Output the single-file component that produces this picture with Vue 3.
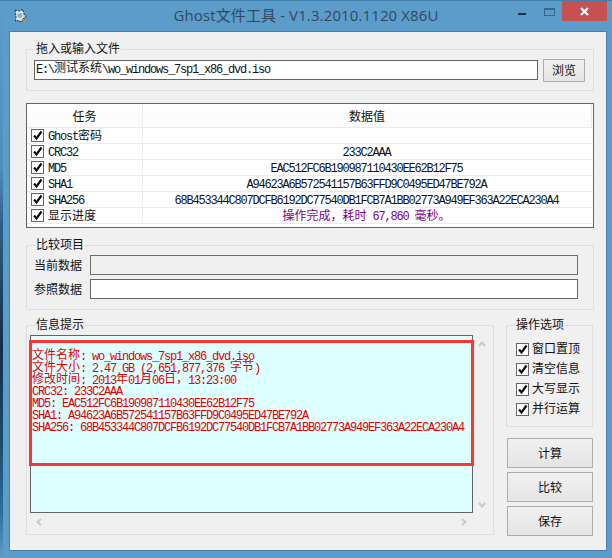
<script setup>
const CJK = /[\u2E80-\u9FFF\uFF00-\uFFEF\u3000-\u303F]/
const split = (text) =>
  text.split(/([\u2E80-\u9FFF\uFF00-\uFFEF\u3000-\u303F]+)/).filter(Boolean).map((t) => ({
    t,
    cjk: CJK.test(t[0]),
  }))

const rows = [
  { name: 'Ghost密码', value: '' },
  { name: 'CRC32', value: '233C2AAA' },
  { name: 'MD5', value: 'EAC512FC6B190987110430EE62B12F75' },
  { name: 'SHA1', value: 'A94623A6B572541157B63FFD9C0495ED47BE792A' },
  { name: 'SHA256', value: '68B453344C807DCFB6192DC77540DB1FCB7A1BB02773A949EF363A22ECA230A4' },
  { name: '显示进度', value: '操作完成，耗时 67,860 毫秒。', progress: true },
]
const log = [
  '文件名称: wo_windows_7sp1_x86_dvd.iso',
  '文件大小: 2.47 GB (2,651,877,376 字节)',
  '修改时间: 2013年01月06日，13:23:00',
  'CRC32: 233C2AAA',
  'MD5: EAC512FC6B190987110430EE62B12F75',
  'SHA1: A94623A6B572541157B63FFD9C0495ED47BE792A',
  'SHA256: 68B453344C807DCFB6192DC77540DB1FCB7A1BB02773A949EF363A22ECA230A4',
]
const options = ['窗口置顶', '清空信息', '大写显示', '并行运算']
</script>

<template>
  <div class="frame">
    <div class="glass"></div>
    <header class="titlebar">
      <svg class="appicon" width="14" height="16" viewBox="0 0 14 16">
        <path d="M2 2 L6 3 L10 1.500 L11 6 L13 9 L10 11 L9 14 L5 12.500 L2.500 13 L3 8.500 Z" fill="#d8e8f2" stroke="#2b3a44" stroke-width="1.100" stroke-dasharray="2 1" />
        <circle cx="7" cy="7.500" r="2.500" fill="#8fb0c6" />
        <path d="M9 11 L12 14" stroke="#e08a20" stroke-width="1.600" />
      </svg>
      <div class="title">Ghost文件工具 - V1.3.2010.1120 X86U</div>
      <div class="controls">
        <span class="min"></span>
        <span class="max"></span>
        <span class="close">
          <svg width="9" height="9" viewBox="0 0 9 9"><path d="M1 1 L8 8 M8 1 L1 8" stroke="#fff" stroke-width="2.200" /></svg>
        </span>
      </div>
    </header>

    <main class="client">
      <section class="group file-group">
        <span class="legend">拖入或输入文件</span>
        <div class="field file-field mono">
          <template v-for="s in split('E:\\测试系统\\wo_windows_7sp1_x86_dvd.iso')" :key="s.t"><span :class="{ cjk: s.cjk }">{{ s.t }}</span></template>
        </div>
        <button class="btn browse">浏览</button>
      </section>

      <section class="table mono">
        <div class="thead">
          <div class="th first">任务</div>
          <div class="th second">数据值</div>
        </div>
        <div v-for="row in rows" :key="row.name" class="tr">
          <div class="td first">
            <span class="check">
              <svg width="11" height="11" viewBox="0 0 11 11"><path d="M2 5.500 L4.500 8.500 L9.500 1.500" fill="none" stroke="#111" stroke-width="2.200" /></svg>
            </span>
            <span class="name"><template v-for="s in split(row.name)" :key="s.t"><span :class="{ cjk: s.cjk }">{{ s.t }}</span></template></span>
          </div>
          <div class="td second" :class="{ progress: row.progress }"><template v-for="(s, i) in split(row.value)" :key="i"><span :class="{ cjk: s.cjk }">{{ s.t }}</span></template></div>
        </div>
      </section>

      <section class="group compare">
        <span class="legend">比较项目</span>
        <label class="cmp-label">当前数据</label>
        <div class="field disabled"></div>
        <label class="cmp-label">参照数据</label>
        <div class="field"></div>
      </section>

      <div class="bottom">
        <section class="group info">
          <span class="legend">信息提示</span>
          <div class="logbox mono">
            <div v-for="(line, n) in log" :key="n" class="logline" :class="{ mixed: CJK.test(line) }"><template v-for="(s, i) in split(line)" :key="i"><span :class="{ cjk: s.cjk }">{{ s.t }}</span></template></div>
            <div class="highlight"></div>
          </div>
          <div class="vscroll">
            <svg width="8" height="6" viewBox="0 0 8 6"><path d="M1 5 L4 1.500 L7 5" fill="none" stroke="#c8c8c8" stroke-width="2" /></svg>
            <svg width="8" height="6" viewBox="0 0 8 6"><path d="M1 1 L4 4.500 L7 1" fill="none" stroke="#c8c8c8" stroke-width="2" /></svg>
          </div>
          <div class="hscroll">
            <svg width="6" height="8" viewBox="0 0 6 8"><path d="M5 1 L1.500 4 L5 7" fill="none" stroke="#c8c8c8" stroke-width="2" /></svg>
            <svg width="6" height="8" viewBox="0 0 6 8"><path d="M1 1 L4.500 4 L1 7" fill="none" stroke="#c8c8c8" stroke-width="2" /></svg>
          </div>
        </section>

        <aside class="side">
          <section class="group options">
            <span class="legend">操作选项</span>
            <div v-for="o in options" :key="o" class="opt">
              <span class="check">
                <svg width="11" height="11" viewBox="0 0 11 11"><path d="M2 5.500 L4.500 8.500 L9.500 1.500" fill="none" stroke="#111" stroke-width="2.200" /></svg>
              </span>
              <span class="opt-text">{{ o }}</span>
            </div>
          </section>
          <button class="btn action first-action">计算</button>
          <button class="btn action">比较</button>
          <button class="btn action">保存</button>
        </aside>
      </div>
    </main>
  </div>
</template>

<style>
html, body { margin: 0; overflow: hidden; }
</style>

<style scoped>
.frame {
  position: relative;
  width: 612px;
  height: 558px;
  box-sizing: border-box;
  display: flex;
  flex-direction: column;
  background: #5c9ccb;
  border-top: 1px solid #3f7fae;
  font-family: "Noto Sans CJK SC", "Liberation Sans", sans-serif;
  font-size: 12px;
  color: #111;
}
.glass {
  position: absolute;
  left: 0;
  top: 0;
  bottom: 0;
  width: 3px;
  background: linear-gradient(180deg, #5c9ccb 0%, #4f8dbb 30%, #2c5f88 40%, #0f2f48 62%, #1a4c70 80%, #2d6f9a 92%, #5c9ccb 100%);
}
.titlebar {
  height: 30px;
  flex: none;
  position: relative;
  display: flex;
  justify-content: center;
}
.appicon {
  position: absolute;
  left: 13px;
  top: 7px;
}
.title {
  margin: 5px 0 0 0;
  font-family: "Open Sans", "Noto Sans CJK SC", sans-serif;
  font-size: 15px;
  letter-spacing: 0.12px;
  line-height: 18px;
  color: #34485c;
  white-space: nowrap;
}
.controls {
  position: absolute;
  left: 518px;
  top: 0;
  width: 89px;
  height: 21px;
}
.min {
  position: absolute;
  left: 0;
  top: 12px;
  width: 8px;
  height: 2px;
  background: #1f2f3f;
}
.max {
  position: absolute;
  left: 26px;
  top: 7px;
  width: 11px;
  height: 8px;
  box-sizing: border-box;
  border: 1px solid #3d6484;
  border-top-width: 2px;
}
.close {
  position: absolute;
  left: 44px;
  top: 0;
  width: 45px;
  height: 20px;
  background: #c75050;
  display: flex;
  align-items: center;
  justify-content: center;
}
.client {
  flex: 1;
  margin: 0 5px 7px 9px;
  padding: 17px 0 0 16px;
  background: #f0f0f0;
  border: 1px solid #4b7fa6;
  box-sizing: border-box;
}
.mono {
  font-family: "Liberation Mono", "Noto Sans CJK SC", monospace;
  font-size: 12px;
  letter-spacing: -1.2px;
}
.cjk {
  font-family: "Noto Sans CJK SC", sans-serif;
  font-size: 12px;
  letter-spacing: 0;
  line-height: 12px;
  position: relative;
  top: -1px;
}
.tr .cjk {
  top: 0;
}
.group {
  position: relative;
  box-sizing: border-box;
  border: 1px solid #dfdfdf;
}
.legend {
  position: absolute;
  left: 8px;
  top: -9px;
  padding: 0 1px;
  background: #f0f0f0;
  font-size: 12px;
  line-height: 14px;
}
.field {
  box-sizing: border-box;
  height: 20px;
  border: 1px solid #646464;
  background: #fff;
}
.file-group {
  width: 568px;
  height: 42px;
  display: flex;
  align-items: center;
  padding-left: 7px;
  gap: 5px;
}
.file-field {
  width: 504px;
  line-height: 18px;
  padding-left: 1px;
  white-space: pre;
}
.btn {
  box-sizing: border-box;
  padding: 0 0 2px;
  border: 1.500px solid #acacac;
  background: linear-gradient(180deg, #f0f0f0, #e5e5e5);
  font-family: "Noto Sans CJK SC", sans-serif;
  font-size: 12px;
  color: #111;
}
.browse {
  width: 42px;
  height: 23px;
}
.table {
  width: 568px;
  height: 125px;
  margin-top: 12px;
  box-sizing: border-box;
  border: 1px solid #646464;
  background: #fff;
  overflow: hidden;
}
.thead {
  display: flex;
  height: 24px;
  width: 565px;
  border-bottom: 1px solid #e3edf6;
  border-right: 1px solid #e3edf6;
  box-sizing: border-box;
  background: linear-gradient(180deg, #fff, #fbfbfb);
}
.th {
  font-family: "Noto Sans CJK SC", sans-serif;
  font-size: 12px;
  letter-spacing: 0;
  line-height: 23px;
  text-align: center;
}
.first {
  width: 116px;
  flex: none;
  box-sizing: border-box;
  border-right: 1px solid #e8eef5;
}
.second {
  flex: 1;
  text-align: center;
  white-space: pre;
}
.tr {
  display: flex;
  height: 16px;
  box-sizing: border-box;
  border-bottom: 1px solid #e9ecef;
  line-height: 19px;
}
.td.first {
  display: flex;
  align-items: center;
  padding-left: 4px;
}
.td.second {
  padding-right: 3px;
}
.check {
  width: 13px;
  height: 13px;
  box-sizing: border-box;
  flex: none;
  border: 1px solid #646464;
  background: #fff;
  display: flex;
  align-items: center;
  justify-content: center;
}
.name {
  margin-left: 4px;
  white-space: pre;
  align-self: flex-start;
}
.progress {
  color: #800080;
}
.compare {
  width: 568px;
  height: 65px;
  margin-top: 17px;
  padding: 9px 15px 0 7px;
  display: grid;
  grid-template-columns: 56px 488px;
  grid-auto-rows: 20px;
  row-gap: 4px;
}
.cmp-label {
  line-height: 20px;
  font-size: 12px;
}
.disabled {
  background: #f0f0f0;
  border-color: #6e6e6e;
}
.bottom {
  display: flex;
  margin-top: 15px;
  align-items: flex-start;
}
.info {
  width: 468px;
  height: 210px;
  padding: 9px 0 0 3px;
  display: grid;
  grid-template-columns: 443px 17px;
  grid-template-rows: 178px 17px;
}
.logbox {
  position: relative;
  box-sizing: border-box;
  border: 1px solid #646464;
  background: #ddffff;
  padding: 14px 0 0 1px;
  color: #e00000;
}
.logline {
  height: 12px;
  line-height: 12px;
  white-space: pre;
}
.mixed {
  position: relative;
  top: -1px;
}
.highlight {
  position: absolute;
  left: -2px;
  top: 4px;
  width: 445px;
  height: 126px;
  box-sizing: border-box;
  border: 3px solid #ff3333;
}
.vscroll {
  display: flex;
  flex-direction: column;
  justify-content: space-between;
  align-items: center;
  padding: 6px 0 5px;
}
.hscroll {
  display: flex;
  justify-content: space-between;
  align-items: center;
  padding: 0 6px;
}
.side {
  width: 87px;
  margin-left: 12px;
  display: flex;
  flex-direction: column;
  align-items: flex-end;
  gap: 4px;
}
.options {
  width: 87px;
  height: 102px;
  align-self: flex-start;
  padding: 13px 0 0 9px;
}
.opt {
  height: 20px;
  display: flex;
  align-items: center;
  gap: 3px;
  font-size: 12px;
}
.opt-text {
  line-height: 14px;
  margin-top: -2px;
}
.action {
  width: 86px;
  height: 30px;
}
.first-action {
  margin-top: 7px;
}
</style>
